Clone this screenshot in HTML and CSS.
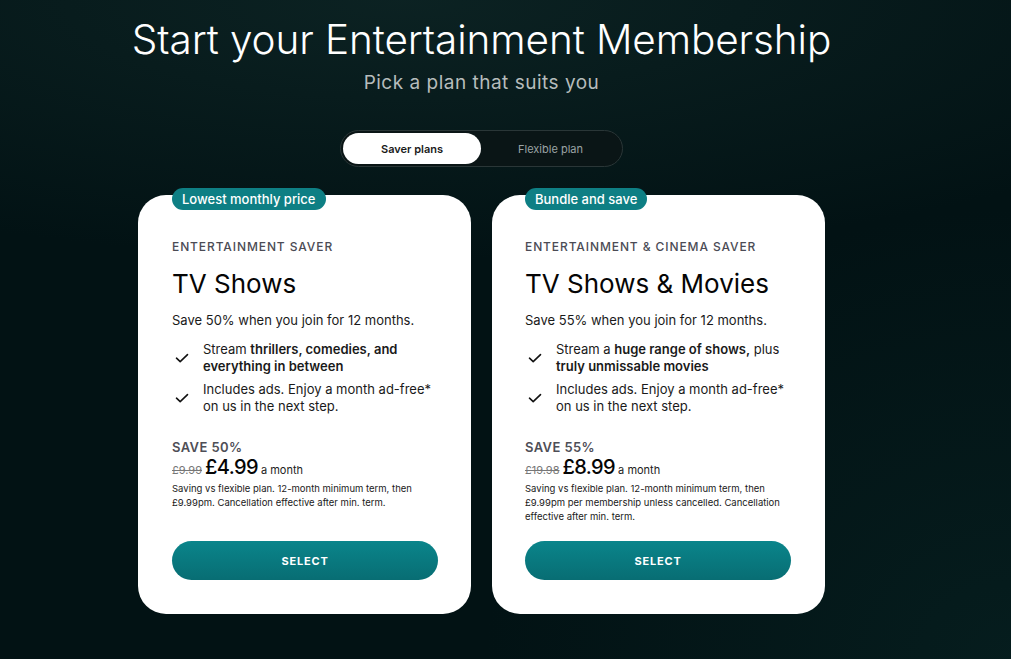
FILE: index.html
```html
<!DOCTYPE html>
<html lang="en">
<head>
<meta charset="utf-8">
<title>Start your Entertainment Membership</title>
<link rel="stylesheet" href="styles.css">
</head>
<body>
<main class="page">
  <header class="hero">
    <h1 class="title">Start your Entertainment Membership</h1>
    <p class="subtitle">Pick a plan that suits you</p>
  </header>

  <div class="toggle">
    <button class="toggle-btn active">Saver plans</button>
    <button class="toggle-btn">Flexible plan</button>
  </div>

  <section class="cards">
    <article class="card">
      <span class="badge">Lowest monthly price</span>
      <p class="eyebrow">ENTERTAINMENT SAVER</p>
      <h2 class="plan">TV Shows</h2>
      <p class="lead">Save 50% when you join for 12 months.</p>
      <ul class="features">
        <li><svg class="check" viewBox="0 0 14 14"><path d="M1.5 7.2 L5.2 10.6 L12.5 3.6" /></svg><span>Stream <b>thrillers, comedies, and everything in between</b></span></li>
        <li><svg class="check" viewBox="0 0 14 14"><path d="M1.5 7.2 L5.2 10.6 L12.5 3.6" /></svg><span>Includes ads. Enjoy a month ad-free* on us in the next step.</span></li>
      </ul>
      <p class="save">SAVE 50%</p>
      <p class="price"><s class="was">£9.99</s> <span class="now">£4.99</span> <span class="per">a month</span></p>
      <p class="terms">Saving vs flexible plan. 12-month minimum term, then £9.99pm. Cancellation effective after min. term.</p>
      <button class="select">SELECT</button>
    </article>

    <article class="card">
      <span class="badge">Bundle and save</span>
      <p class="eyebrow">ENTERTAINMENT &amp; CINEMA SAVER</p>
      <h2 class="plan">TV Shows &amp; Movies</h2>
      <p class="lead">Save 55% when you join for 12 months.</p>
      <ul class="features">
        <li><svg class="check" viewBox="0 0 14 14"><path d="M1.5 7.2 L5.2 10.6 L12.5 3.6" /></svg><span>Stream a <b>huge range of shows,</b> plus <b>truly unmissable movies</b></span></li>
        <li><svg class="check" viewBox="0 0 14 14"><path d="M1.5 7.2 L5.2 10.6 L12.5 3.6" /></svg><span>Includes ads. Enjoy a month ad-free* on us in the next step.</span></li>
      </ul>
      <p class="save">SAVE 55%</p>
      <p class="price"><s class="was">£19.98</s> <span class="now">£8.99</span> <span class="per">a month</span></p>
      <p class="terms">Saving vs flexible plan. 12-month minimum term, then £9.99pm per membership unless cancelled. Cancellation effective after min. term.</p>
      <button class="select">SELECT</button>
    </article>
  </section>
</main>
</body>
</html>
```

FILE: styles.css
```css
* { box-sizing: border-box; }

html, body {
  margin: 0;
  height: 100%;
}

body {
  font-family: Inter, "Noto Sans", "Liberation Sans", sans-serif;
  color: #fff;
  background:
    radial-gradient(ellipse 700px 600px at 100% 100%, rgba(8, 36, 36, 0.6) 0%, rgba(8, 36, 36, 0) 75%),
    radial-gradient(ellipse 900px 260px at 40% 0%, rgba(14, 38, 38, 0.8) 0%, rgba(14, 38, 38, 0) 100%),
    #021214;
  overflow: hidden;
}

.page {
  width: 963px;
  display: flex;
  flex-direction: column;
  align-items: center;
}

.hero {
  text-align: center;
  padding-top: 16px;
}

.title {
  margin: 0;
  font-size: 40.5px;
  font-weight: 300;
  line-height: 48px;
  letter-spacing: -0.1px;
  color: #fff;
}

.subtitle {
  margin: 7px 0 0;
  font-size: 19px;
  line-height: 24px;
  color: #b6bcbc;
  letter-spacing: 0.5px;
}

.toggle {
  margin-top: 35px;
  width: 283px;
  height: 37px;
  padding: 2px;
  display: flex;
  border: 1px solid #2a3637;
  border-radius: 19px;
  background: #0a1516;
}

.toggle-btn {
  flex: 1;
  border: 0;
  background: transparent;
  border-radius: 16px;
  font-family: inherit;
  font-size: 11px;
  color: #9aa3a4;
  padding: 0;
}

.toggle-btn.active {
  flex: 0 0 138px;
  background: #fff;
  color: #1a1a1a;
  font-weight: 600;
}

.cards {
  margin-top: 28px;
  display: flex;
  gap: 21px;
}

.card {
  position: relative;
  width: 333px;
  height: 419px;
  background: #fff;
  border-radius: 28px;
  padding: 44px 33px 0 34px;
  color: #111;
  display: flex;
  flex-direction: column;
}

.card + .card {
  padding-left: 33px;
}

.card + .card .badge {
  left: 33px;
}

.badge {
  position: absolute;
  left: 34px;
  top: -7px;
  height: 22px;
  line-height: 22px;
  padding: 0 10px;
  border-radius: 11px;
  background: #0e7f84;
  color: #fff;
  font-size: 13px;
  font-weight: 500;
}

.eyebrow {
  margin: 0;
  font-size: 12px;
  line-height: 16px;
  font-weight: 500;
  letter-spacing: 0.9px;
  color: #4b4b55;
}

.plan {
  margin: 13px 0 0;
  font-size: 26px;
  line-height: 32px;
  font-weight: 400;
  color: #050505;
}

.lead {
  margin: 11px 0 0;
  font-size: 13px;
  line-height: 18px;
  color: #1a1a1a;
}

.features {
  list-style: none;
  margin: 12px 0 0;
  padding: 0;
  display: flex;
  flex-direction: column;
  gap: 6px;
}

.features li {
  display: flex;
  align-items: center;
  gap: 14px;
  font-size: 13px;
  line-height: 17px;
  color: #1a1a1a;
}

.features b { font-weight: 600; }

.check {
  flex: 0 0 14px;
  width: 14px;
  height: 14px;
  margin-left: 3px;
  fill: none;
  stroke: #111;
  stroke-width: 1.6;
  stroke-linecap: round;
  stroke-linejoin: round;
}

.save {
  margin: 24px 0 0;
  font-size: 13px;
  line-height: 16px;
  font-weight: 600;
  letter-spacing: 0.4px;
  color: #4e4e56;
}

.price {
  margin: 0;
  display: flex;
  align-items: baseline;
  gap: 3px;
  line-height: 24px;
}

.was {
  font-size: 11px;
  color: #777;
}

.now {
  font-size: 20px;
  font-weight: 500;
  letter-spacing: -0.6px;
  color: #050505;
}

.per {
  font-size: 11px;
  color: #222;
}

.terms {
  margin: 0;
  font-size: 9.5px;
  line-height: 14px;
  color: #1a1a1a;
}

.select {
  margin-top: auto;
  margin-bottom: 34px;
  width: 266px;
  height: 39px;
  border: 0;
  border-radius: 20px;
  background: linear-gradient(180deg, #0a858b 0%, #086d73 100%);
  color: #fff;
  font-family: inherit;
  font-size: 11px;
  font-weight: 700;
  letter-spacing: 0.8px;
}
```
